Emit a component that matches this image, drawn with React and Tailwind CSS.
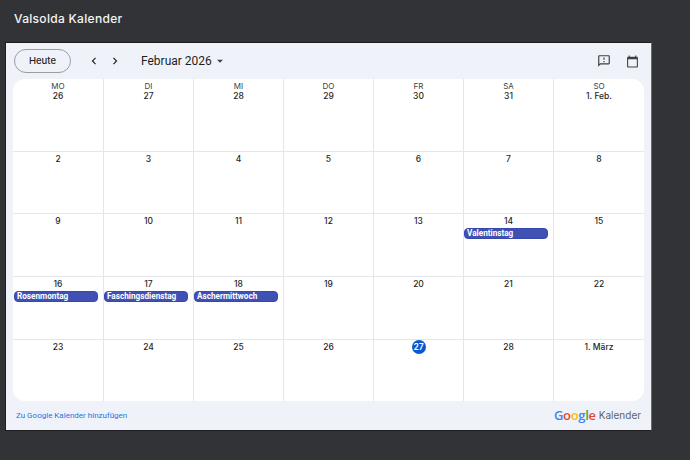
const F = { fontFamily: '"Inter","Liberation Sans",sans-serif' };
const R = { fontFamily: '"Roboto","Liberation Sans",sans-serif' };
const days = ['MO','DI','MI','DO','FR','SA','SO'];
const weeks = [
  ['26','27','28','29','30','31','1. Feb.'],
  ['2','3','4','5','6','7','8'],
  ['9','10','11','12','13','14','15'],
  ['16','17','18','19','20','21','22'],
  ['23','24','25','26','27','28','1. März'],
];
const events = { '14': 'Valentinstag', '16': 'Rosenmontag', '17': 'Faschingsdienstag', '18': 'Aschermittwoch' };
const rowClass = ['h-[72px]', 'h-[62px]', 'h-[63px]', 'h-[63px]', 'h-[62px]'];

function Cell({ label, head, col, row }) {
  const today = row === 4 && label === '27';
  const ev = row > 0 ? events[label] : null;
  return (
    <div className={`flex flex-col items-center ${col > 0 ? 'border-l border-[#e3e6ea]' : ''} ${row > 0 ? 'border-t border-[#e3e6ea]' : ''}`}>
      {head && <div className="mt-[2px] h-[10px] text-[8px] leading-[10px] text-[#3c4043]">{head}</div>}
      {today ? (
        <div className="flex h-[14px] w-[14px] items-center justify-center rounded-full bg-[#0b57d0] text-[8.5px] font-semibold leading-none text-white">{label}</div>
      ) : (
        <div className={`${row > 0 ? 'mt-[1px]' : 'mt-[-1px]'} h-[13px] text-[8.5px] font-medium leading-[13px] text-[#1f1f1f]`}>{label}</div>
      )}
      {ev && (
        <div className={`mr-[5px] h-[11px] self-stretch rounded-[4px] border border-[#3949ab] bg-[#3f51b5] pl-[2px] text-[8.2px] font-bold leading-[9px] text-white ${col === 0 ? 'ml-[1px]' : 'ml-0'}`} style={R}>{ev}</div>
      )}
    </div>
  );
}

export default function App() {
  return (
    <div className="flex h-[460px] w-[690px] flex-col overflow-hidden bg-[#323337]" style={F}>
      <div className="flex h-[42px] items-start pl-[14px] pt-[11px] text-[12px] font-medium leading-[16px] tracking-[0.3px] text-[#f5f5f5]">
        Valsolda Kalender
      </div>
      <div className="ml-[5px] flex h-[389px] w-[647px] flex-col border border-[#1d1d1f] border-r-[#6c6d70] bg-[#eff3f9]">
        <div className="flex h-[36px] shrink-0 items-center pl-[8px] pr-[12px]">
          <button className="h-[24px] w-[57px] rounded-full border border-[#9a9ea3] text-[9.5px] font-medium text-[#1f1f1f]">Heute</button>
          <svg className="ml-[16px]" width="14" height="14" viewBox="0 0 24 24" fill="#1f1f1f"><path d="M15.4 7.4 14 6l-6 6 6 6 1.4-1.4L10.8 12z"/></svg>
          <svg className="ml-[7px]" width="14" height="14" viewBox="0 0 24 24" fill="#1f1f1f"><path d="M8.6 7.4 10 6l6 6-6 6-1.4-1.4 4.6-4.6z"/></svg>
          <div className="ml-[19px] text-[12px] leading-[16px] text-[#1f1f1f]" style={R}>Februar 2026</div>
          <svg className="ml-[1px]" width="14" height="14" viewBox="0 0 24 24" fill="#3c4043"><path d="M7 10l5 5 5-5z"/></svg>
          <div className="flex-1" />
          <svg width="14" height="14" viewBox="0 0 24 24" fill="#3c4043"><path d="M20 2H4c-1.1 0-1.99.9-1.99 2L2 22l4-4h14c1.1 0 2-.9 2-2V4c0-1.1-.9-2-2-2zm0 14H5.17L4 17.17V4h16v12zM11 12h2v2h-2zm0-6h2v4h-2z"/></svg>
          <svg className="ml-[15px]" width="13" height="13" viewBox="0 0 24 24" fill="#3c4043"><path d="M20 3h-1V1h-2v2H7V1H5v2H4c-1.1 0-2 .9-2 2v16c0 1.1.9 2 2 2h16c1.1 0 2-.9 2-2V5c0-1.1-.9-2-2-2zm0 18H4V8h16v13z"/></svg>
        </div>
        <div className="mx-[7px] flex h-[322px] flex-col overflow-hidden rounded-[12px] bg-white">
          {weeks.map((w, r) => (
            <div key={r} className={`grid grid-cols-[90px_90px_90px_90px_90px_90px_91px] ${rowClass[r]}`}>
              {w.map((d, c) => <Cell key={c} label={d} head={r === 0 ? days[c] : null} col={c} row={r} />)}
            </div>
          ))}
        </div>
        <div className="flex flex-1 items-center pl-[10px] pr-[10px]">
          <span className="text-[8px] text-[#1a73e8]" style={R}>Zu Google Kalender hinzufügen</span>
          <div className="flex-1" />
          <span className="text-[13px] font-semibold leading-none tracking-[-0.3px]" style={{ fontFamily: '"Open Sans","Liberation Sans",sans-serif' }}>
            <span className="text-[#4285f4]">G</span><span className="text-[#ea4335]">o</span><span className="text-[#fbbc05]">o</span><span className="text-[#4285f4]">g</span><span className="text-[#34a853]">l</span><span className="text-[#ea4335]">e</span>
          </span>
          <span className="ml-[3px] text-[10px] text-[#5f6368]">Kalender</span>
        </div>
      </div>
    </div>
  );
}
